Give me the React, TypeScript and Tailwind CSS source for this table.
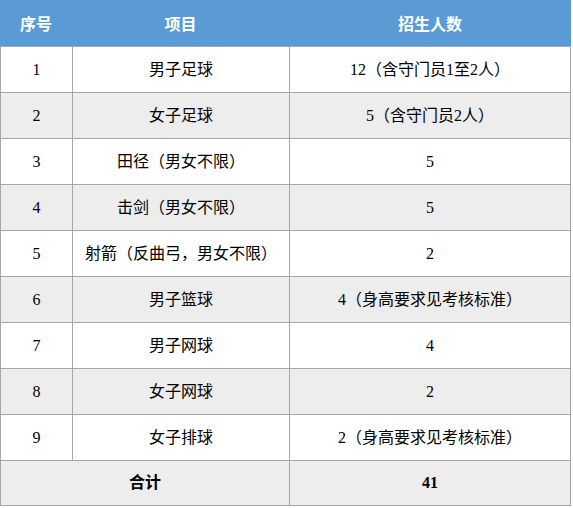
import React from "react";

const rows: [string, string, string][] = [
  ["1", "男子足球", "12（含守门员1至2人）"],
  ["2", "女子足球", "5（含守门员2人）"],
  ["3", "田径（男女不限）", "5"],
  ["4", "击剑（男女不限）", "5"],
  ["5", "射箭（反曲弓，男女不限）", "2"],
  ["6", "男子篮球", "4（身高要求见考核标准）"],
  ["7", "男子网球", "4"],
  ["8", "女子网球", "2"],
  ["9", "女子排球", "2（身高要求见考核标准）"],
];

export default function App() {
  return (
    <div
      className="w-[573px] h-[508px] bg-white text-black"
      style={{ fontFamily: '"Liberation Serif", "Noto Sans CJK SC", serif' }}
    >
      <div className="w-[571px]">
        <div
          className="flex h-[46px] bg-[#5b9bd5] text-white font-bold text-[16px]"
          style={{ fontFamily: '"Noto Sans CJK SC", sans-serif' }}
        >
          <div className="w-[72px] flex items-center justify-center">序号</div>
          <div className="w-[217px] flex items-center justify-center">项目</div>
          <div className="w-[282px] flex items-center justify-center">招生人数</div>
        </div>
        {rows.map((r, i) => (
          <div
            key={r[0]}
            className={`flex h-[46px] border-t border-[#a6a6a6] text-[16px] ${
              i % 2 === 1 ? "bg-[#ededed]" : "bg-white"
            }`}
          >
            <div className="w-[72px] border-l border-[#a6a6a6] flex items-center justify-center">
              {r[0]}
            </div>
            <div className="w-[217px] border-l border-[#a6a6a6] flex items-center justify-center">
              {r[1]}
            </div>
            <div className="w-[282px] border-l border-r border-[#a6a6a6] flex items-center justify-center">
              {r[2]}
            </div>
          </div>
        ))}
        <div className="flex h-[46px] border-t border-b border-[#a6a6a6] bg-[#ededed] text-[16px] font-bold">
          <div className="w-[289px] border-l border-[#a6a6a6] flex items-center justify-center">
            合计
          </div>
          <div className="w-[282px] border-l border-r border-[#a6a6a6] flex items-center justify-center">
            41
          </div>
        </div>
      </div>
    </div>
  );
}
